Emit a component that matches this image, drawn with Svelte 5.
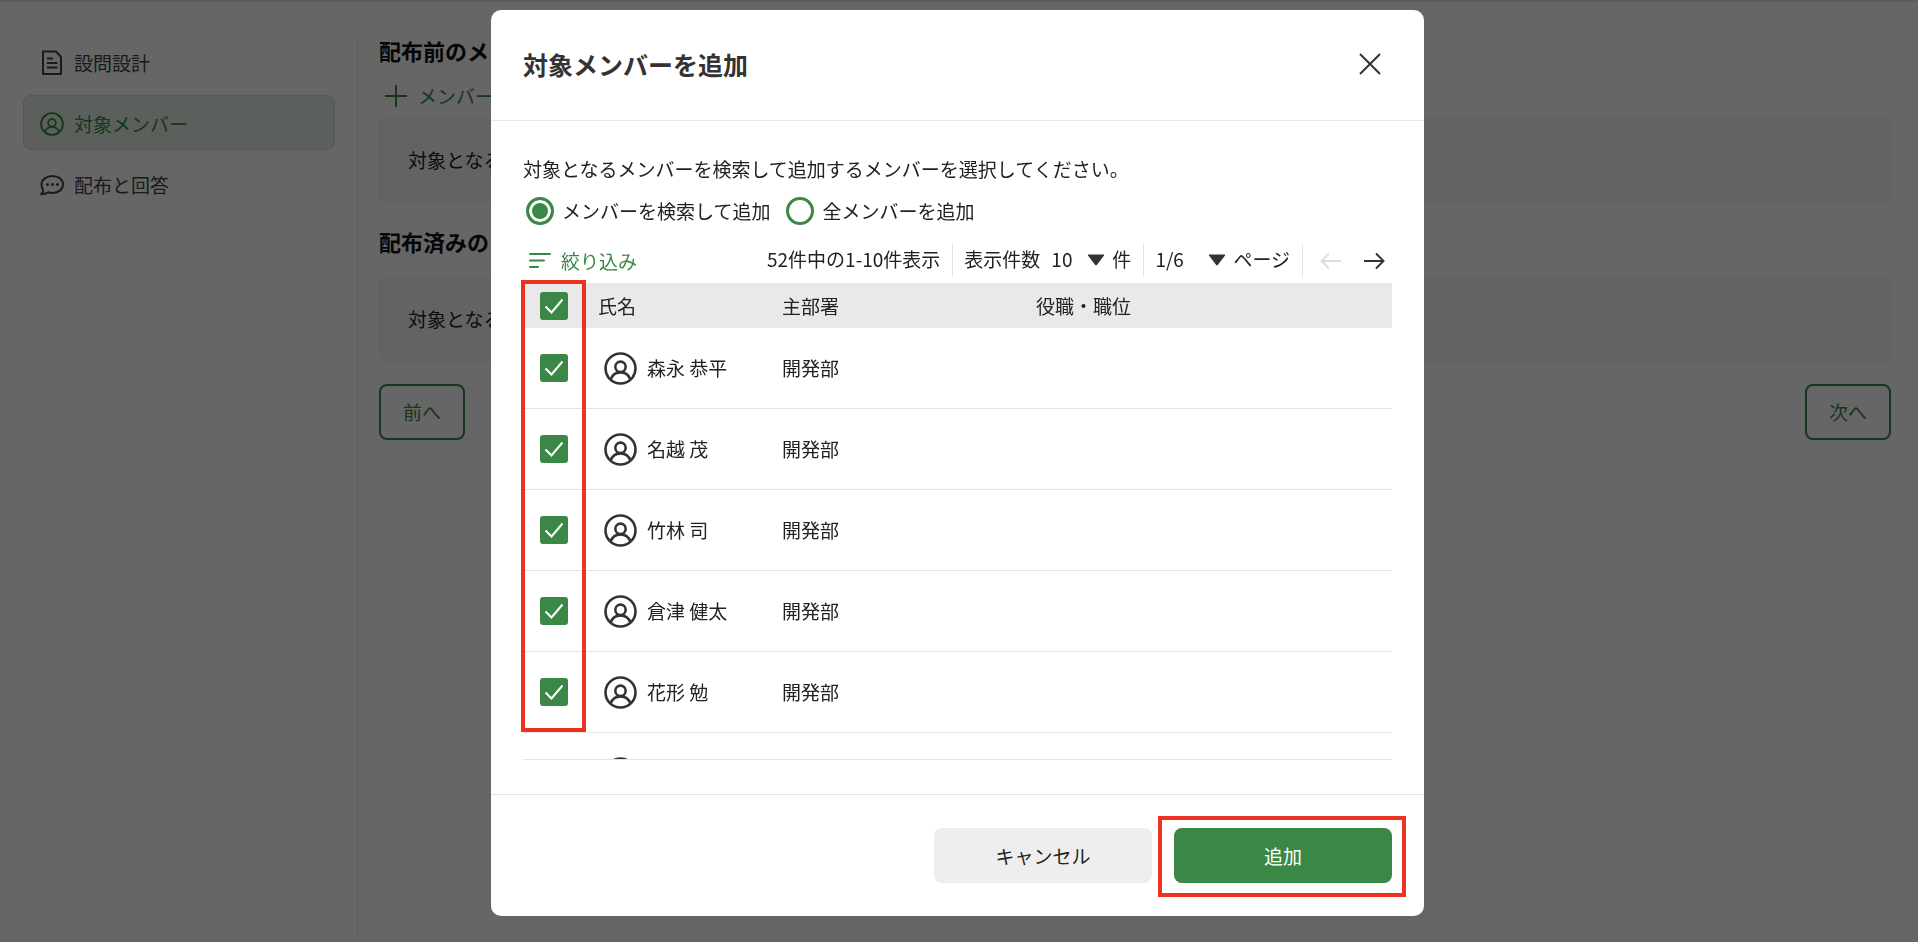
<script>
  const navItems = [
    { id: "design", label: "設問設計" },
    { id: "members", label: "対象メンバー" },
    { id: "answers", label: "配布と回答" },
  ];

  let activeNav = $state("members");
  let addMode = $state("search");
  let perPage = $state("10");
  let page = $state("1");
  let open = $state(true);

  let members = $state([
    { name: "森永 恭平", dept: "開発部", role: "", checked: true },
    { name: "名越 茂", dept: "開発部", role: "", checked: true },
    { name: "竹林 司", dept: "開発部", role: "", checked: true },
    { name: "倉津 健太", dept: "開発部", role: "", checked: true },
    { name: "花形 勉", dept: "開発部", role: "", checked: true },
    { name: "", dept: "", role: "", checked: true },
  ]);

  let allChecked = $derived(members.every((m) => m.checked));

  function toggleAll(event) {
    for (const m of members) {
      m.checked = event.target.checked;
    }
  }

  function close() {
    open = false;
  }
</script>

{#snippet userIcon(size)}
  <svg width={size} height={size} viewBox="0 0 33 33" fill="none" stroke="currentColor" stroke-width="2.6" aria-hidden="true">
    <circle cx="16.5" cy="16.5" r="15" />
    <circle cx="16.5" cy="14.8" r="5.2" />
    <path d="M6.6 27.6C8.4 22.8 12 20.400 16.5 20.400S24.600 22.800 26.400 27.600" />
  </svg>
{/snippet}

{#snippet checkMark()}
  <svg class="check-mark" width="28" height="28" viewBox="0 0 28 28" fill="none" stroke="#fff" stroke-width="2" aria-hidden="true">
    <path d="M5.5 14.5L11.5 20.5L22.500 7.500" />
  </svg>
{/snippet}

{#snippet caret()}
  <svg class="caret" width="18" height="12" viewBox="0 0 18 12" fill="#333" aria-hidden="true">
    <path d="M1.5 0.5h15q1 0 0.5 1L9.800 11q-0.800 0.800-1.600 0L1 1.500q-0.500-1 0.500-1z" />
  </svg>
{/snippet}

<div class="page">
  <nav class="sidebar">
    {#each navItems as item}
      <button class="nav-item" class:active={activeNav === item.id} onclick={() => (activeNav = item.id)}>
        {#if item.id === "design"}
          <svg width="24" height="26" viewBox="0 0 24 26" fill="none" stroke="currentColor" stroke-width="2" aria-hidden="true">
            <path d="M3 1.500h13l5 5.500v17H3z" stroke-linejoin="round" />
            <path d="M7 8.500h6M7 13h10.500M7 17.500h10.500" />
          </svg>
        {:else if item.id === "members"}
          {@render userIcon(24)}
        {:else}
          <svg width="24" height="24" viewBox="0 0 24 24" fill="none" stroke="currentColor" stroke-width="2" aria-hidden="true">
            <path d="M12.500 3C18.500 3 23 6.500 23 11.500S18.500 20 12.500 20c-1.700 0-3-.2-4.300-.7C6.500 20.600 4 21.300 1.200 21.300c1.200-1.200 2-2.700 2-4.300C2 15.500 1.500 13.500 1.500 11.500 1.500 6.500 6.500 3 12.500 3z" stroke-linejoin="round" />
            <g fill="currentColor" stroke="none">
              <circle cx="7.5" cy="11.5" r="1.5" />
              <circle cx="12.5" cy="11.5" r="1.5" />
              <circle cx="17.5" cy="11.5" r="1.5" />
            </g>
          </svg>
        {/if}
        {item.label}
      </button>
    {/each}
  </nav>

  <main class="content">
    <h2>配布前のメンバー</h2>
    <button class="add-link">
      <svg width="22" height="22" viewBox="0 0 22 22" fill="none" stroke="currentColor" stroke-width="2" aria-hidden="true">
        <path d="M11 0v22M0 11h22" />
      </svg>
      メンバーを追加
    </button>
    <div class="panel">対象となるメンバーはいません。</div>
    <h2 class="second">配布済みのメンバー</h2>
    <div class="panel">対象となるメンバーはいません。</div>
    <div class="pager-buttons">
      <button class="outline-btn">前へ</button>
      <button class="outline-btn">次へ</button>
    </div>
  </main>
</div>

{#if open}
  <div class="overlay">
    <div class="modal" role="dialog" aria-modal="true" aria-labelledby="modal-title">
      <header class="modal-header">
        <h1 id="modal-title">対象メンバーを追加</h1>
        <button class="close-btn" aria-label="閉じる" onclick={close}>
          <svg width="22" height="22" viewBox="0 0 22 22" fill="none" stroke="#333" stroke-width="2" aria-hidden="true">
            <path d="M1 1l20 20M21 1L1 21" />
          </svg>
        </button>
      </header>

      <div class="modal-body">
        <p class="lead">対象となるメンバーを検索して追加するメンバーを選択してください。</p>

        <div class="radios">
          <label>
            <input type="radio" name="mode" value="search" bind:group={addMode} />
            メンバーを検索して追加
          </label>
          <label>
            <input type="radio" name="mode" value="all" bind:group={addMode} />
            全メンバーを追加
          </label>
        </div>

        <div class="toolbar">
          <button class="filter-btn">
            <svg width="22" height="18" viewBox="0 0 22 18" fill="none" stroke="currentColor" stroke-width="2" stroke-linecap="round" aria-hidden="true">
              <path d="M1 2h20M1 8.500h14M1 15h8" />
            </svg>
            絞り込み
          </button>

          <div class="paging">
            <span class="group">52件中の1-10件表示</span>
            <div class="group">
              <label for="per-page">表示件数</label>
              <span class="select">
                <select id="per-page" bind:value={perPage}>
                  <option value="10">10</option>
                  <option value="20">20</option>
                  <option value="50">50</option>
                </select>
                {@render caret()}
              </span>
              <span>件</span>
            </div>
            <div class="group">
              <span class="select wide">
                <select id="page" bind:value={page}>
                  {#each [1, 2, 3, 4, 5, 6] as n}
                    <option value={String(n)}>{n}/6</option>
                  {/each}
                </select>
                {@render caret()}
              </span>
              <label for="page">ページ</label>
            </div>
            <div class="arrows">
              <button aria-label="前のページ" disabled>
                <svg width="22" height="18" viewBox="0 0 22 18" fill="none" stroke="currentColor" stroke-width="2" aria-hidden="true">
                  <path d="M21 9H2M9 1.500L1.500 9L9 16.500" />
                </svg>
              </button>
              <button aria-label="次のページ">
                <svg width="22" height="18" viewBox="0 0 22 18" fill="none" stroke="currentColor" stroke-width="2" aria-hidden="true">
                  <path d="M1 9h19M13 1.500L20.500 9L13 16.500" />
                </svg>
              </button>
            </div>
          </div>
        </div>

        <div class="table-area">
          <div class="table-scroll">
            <table>
              <thead>
                <tr>
                  <th class="col-check">
                    <label class="checkbox">
                      <input type="checkbox" aria-label="すべて選択" checked={allChecked} onchange={toggleAll} />
                      {@render checkMark()}
                    </label>
                  </th>
                  <th class="col-name">氏名</th>
                  <th class="col-dept">主部署</th>
                  <th>役職・職位</th>
                </tr>
              </thead>
              <tbody>
                {#each members as member}
                  <tr>
                    <td class="col-check">
                      <label class="checkbox">
                        <input type="checkbox" aria-label="選択" bind:checked={member.checked} />
                        {@render checkMark()}
                      </label>
                    </td>
                    <td>
                      <div class="member">
                        {@render userIcon(33)}
                        {member.name}
                      </div>
                    </td>
                    <td>{member.dept}</td>
                    <td>{member.role}</td>
                  </tr>
                {/each}
              </tbody>
            </table>
          </div>
          <div class="mark mark-checks"></div>
        </div>
      </div>

      <footer class="modal-footer">
        <button class="btn btn-cancel" onclick={close}>キャンセル</button>
        <div class="submit">
          <button class="btn btn-primary">追加</button>
          <div class="mark mark-submit"></div>
        </div>
      </footer>
    </div>
  </div>
{/if}

<style>
  :global(body) {
    margin: 0;
    background: #fff;
    color: #222;
    font-family: "Noto Sans CJK JP", "Noto Sans", sans-serif;
    font-size: 19px;
    line-height: 28px;
  }

  button,
  select,
  input {
    margin: 0;
    font: inherit;
    color: inherit;
  }

  button {
    padding: 0;
    border: none;
    background: none;
    cursor: pointer;
  }

  svg {
    display: block;
    flex: none;
  }

  .page {
    box-sizing: border-box;
    display: flex;
    min-height: 100vh;
    padding: 32px 27px 0 23px;
    border-top: 2px solid #e8e8e8;
  }

  .sidebar {
    box-sizing: border-box;
    display: flex;
    flex: none;
    flex-direction: column;
    gap: 6px;
    width: 335px;
    padding-right: 22px;
    border-right: 1px solid #e9eeec;
  }

  .nav-item {
    box-sizing: border-box;
    display: flex;
    align-items: center;
    gap: 10px;
    height: 55px;
    padding: 3px 16px 0;
    border: 1px solid transparent;
    border-radius: 8px;
    color: #444;
    text-align: left;
  }

  .nav-item.active {
    border-color: #c9dfd0;
    background: #e4f1e6;
    color: #3b8745;
  }

  .content {
    flex: 1;
    min-width: 0;
    padding-left: 21px;
  }

  h2 {
    margin: 0 0 14px;
    font-size: 22px;
    line-height: 32px;
    font-weight: 700;
    color: #111;
  }

  h2.second {
    margin: 22px 0 19px;
  }

  .add-link {
    display: flex;
    align-items: center;
    gap: 11px;
    height: 32px;
    margin-bottom: 5px;
    padding-left: 6px;
    color: #3b8745;
  }

  .panel {
    padding: 28px;
    border: 1px solid #efefef;
    border-radius: 8px;
    background: #f8f8f8;
  }

  .pager-buttons {
    display: flex;
    justify-content: space-between;
    margin-top: 22px;
  }

  .outline-btn {
    width: 86px;
    height: 56px;
    border: 2px solid #3b8745;
    border-radius: 8px;
    color: #3b8745;
  }

  .overlay {
    position: fixed;
    inset: 0;
    box-sizing: border-box;
    display: flex;
    justify-content: center;
    padding: 10px 3px 26px 0;
    background: rgba(0, 0, 0, 0.6);
  }

  .modal {
    display: flex;
    flex-direction: column;
    width: 100%;
    max-width: 933px;
    border-radius: 10px;
    background: #fff;
  }

  .modal-header {
    display: flex;
    align-items: center;
    justify-content: space-between;
    height: 108px;
    padding: 0 43px 2px 32px;
    border-bottom: 1px solid #e8e8e8;
  }

  h1 {
    margin: 0;
    font-size: 25px;
    line-height: 36px;
    font-weight: 700;
    color: #333;
  }

  .modal-body {
    display: flex;
    flex: 1;
    flex-direction: column;
    min-height: 0;
    padding: 32px 32px 34px;
  }

  .lead {
    margin: 0 0 8px;
    line-height: 32px;
  }

  .radios {
    display: flex;
    align-items: center;
    gap: 16px;
    height: 36px;
    padding-left: 3px;
  }

  .radios label {
    display: flex;
    align-items: center;
    gap: 8px;
  }

  .radios input {
    appearance: none;
    box-sizing: border-box;
    width: 28px;
    height: 28px;
    border: 3px solid #3b8745;
    border-radius: 50%;
    background: #fff;
  }

  .radios input:checked {
    background: #3b8745;
    box-shadow: inset 0 0 0 3px #fff;
  }

  .toolbar {
    display: flex;
    align-items: center;
    justify-content: space-between;
    margin: 15px 0 6px;
  }

  .filter-btn {
    display: flex;
    align-items: center;
    gap: 10px;
    padding-left: 6px;
    color: #3b8745;
  }

  .paging {
    display: flex;
  }

  .group {
    box-sizing: border-box;
    display: flex;
    align-items: center;
    height: 33px;
    padding: 0 12px 3px 11px;
    border-right: 1px solid #e3e3e3;
  }

  .select {
    display: grid;
    align-items: center;
    width: 54px;
    margin: 0 7px 0 11px;
  }

  .select.wide {
    width: 71px;
    margin-left: 0;
  }

  .select select,
  .select .caret {
    grid-area: 1 / 1;
  }

  .select select {
    appearance: none;
    width: 100%;
    padding: 0;
    border: none;
    background: none;
  }

  .caret {
    justify-self: end;
    margin-top: 2px;
    pointer-events: none;
  }

  .arrows {
    display: flex;
    align-items: center;
    gap: 21px;
    padding: 0 7px 0 17px;
    color: #333;
  }

  .arrows button:disabled {
    color: #ddd;
  }

  .table-area {
    position: relative;
    flex: 1;
    min-height: 0;
  }

  .table-scroll {
    box-sizing: border-box;
    height: 100%;
    overflow-y: auto;
    border-bottom: 1px solid #e3e3e3;
    scrollbar-width: none;
  }

  table {
    width: 100%;
    border-collapse: separate;
    border-spacing: 0;
    table-layout: fixed;
  }

  th,
  td {
    box-sizing: border-box;
    padding: 0 12px;
    text-align: left;
    font-weight: 400;
  }

  th {
    height: 45px;
    background: #e9e9e9;
  }

  td {
    height: 81px;
    border-bottom: 1px solid #e3e3e3;
  }

  .col-check {
    width: 63px;
    padding: 0 0 0 17px;
  }

  .col-name {
    width: 184px;
  }

  .col-dept {
    width: 254px;
  }

  .checkbox {
    display: grid;
    width: 28px;
  }

  .checkbox input,
  .check-mark {
    grid-area: 1 / 1;
  }

  .checkbox input {
    appearance: none;
    box-sizing: border-box;
    width: 28px;
    height: 28px;
    border: 2px solid #3b8745;
    border-radius: 3px;
  }

  .checkbox input:checked {
    background: #3b8745;
  }

  .check-mark {
    pointer-events: none;
  }

  .member {
    display: flex;
    align-items: center;
    gap: 10px;
    padding-left: 6px;
  }

  .member :global(svg) {
    color: #333;
  }

  .modal-footer {
    display: flex;
    justify-content: flex-end;
    gap: 22px;
    padding: 33px 32px;
    border-top: 1px solid #e3e3e3;
  }

  .btn {
    width: 218px;
    height: 55px;
    border-radius: 8px;
  }

  .btn-cancel {
    background: #eee;
  }

  .btn-primary {
    background: #3b8745;
    color: #fff;
  }

  .submit {
    position: relative;
  }

  /* red highlight frames */
  .mark {
    position: absolute;
    box-sizing: border-box;
    border: 4px solid #ec3323;
    pointer-events: none;
  }

  .mark-checks {
    top: -3px;
    left: -2px;
    width: 65px;
    height: 452px;
  }

  .mark-submit {
    inset: -12px -14px -14px -16px;
  }
</style>
